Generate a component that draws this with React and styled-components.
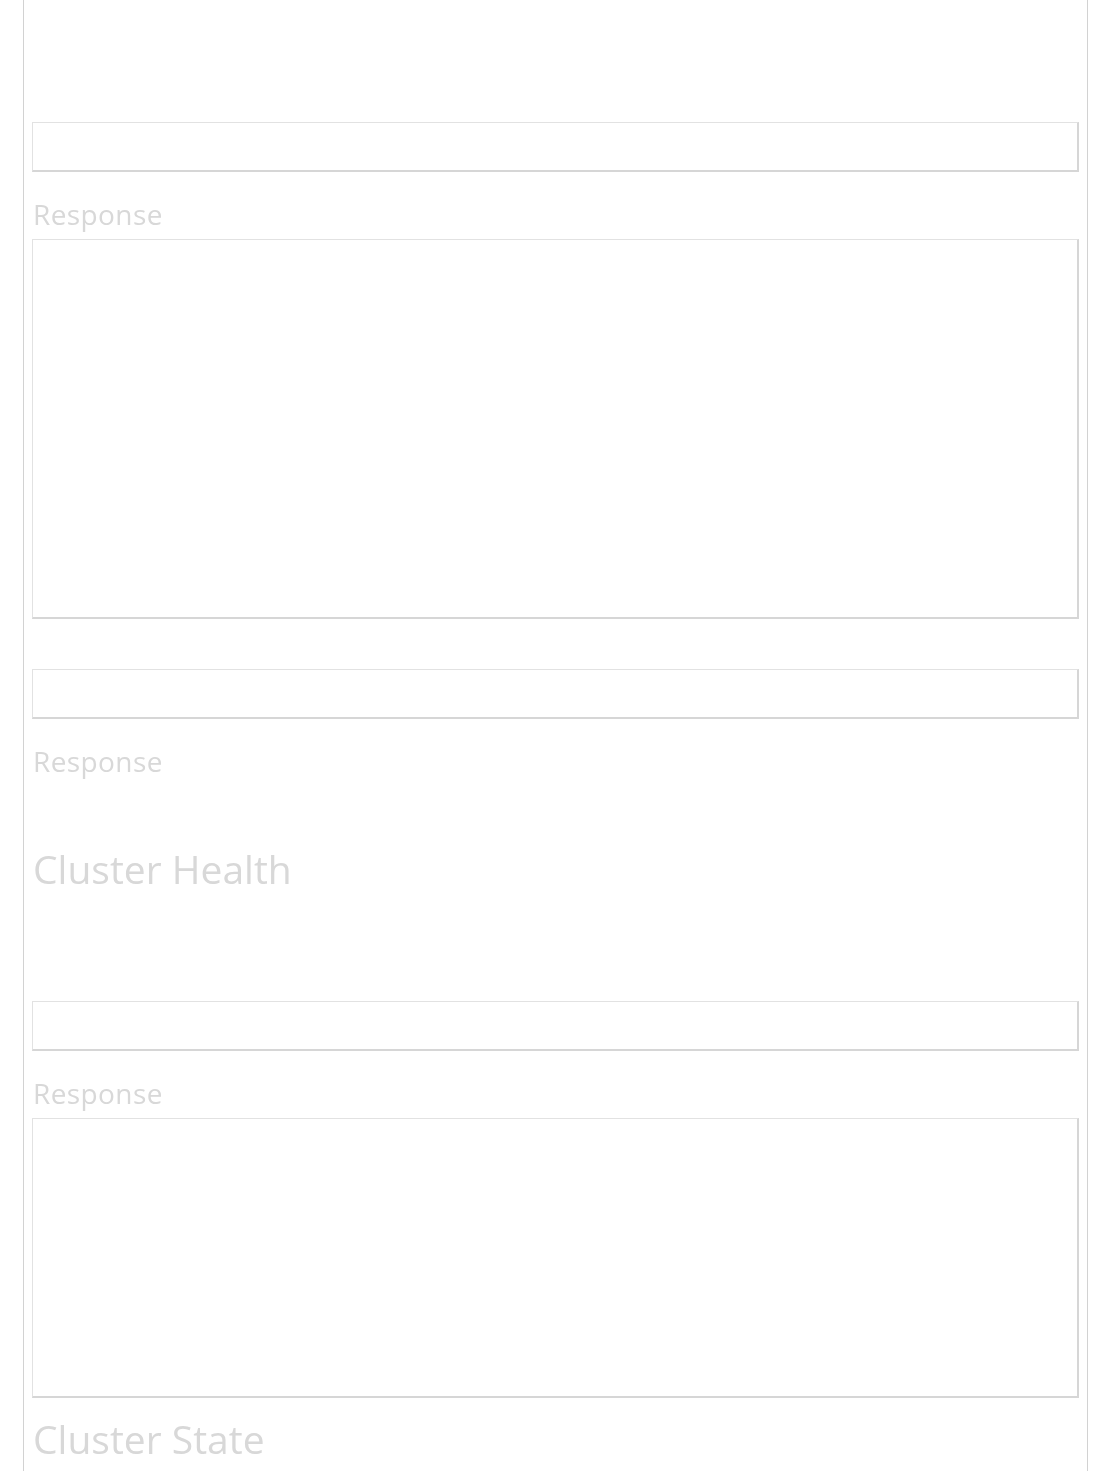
import React from "react";
import styled, { createGlobalStyle } from "styled-components";

const GlobalStyle = createGlobalStyle`
	html, body {
		margin: 0;
		padding: 0;
		background: #ffffff;
	}
	body {
		font-family: "Open Sans", "DejaVu Sans", sans-serif;
		color: #dadada;
	}
`;

const sections = [
	{ id: "search", title: null, output: 380 },
	{ id: "count", title: null, output: null },
	{ id: "health", title: "Cluster Health", output: 280 },
	{ id: "state", title: "Cluster State", output: null, last: true },
];

const App = () => {
	return (
		<>
			<GlobalStyle />
			<Page>
				<Column>
					{sections.map((s) => (
						<Section key={s.id} $first={s.id === "search"} $titled={!!s.title}>
							{s.title && <Heading>{s.title}</Heading>}
							{!s.last && (
								<>
									<Request $titled={!!s.title} />
									<Label>Response</Label>
									{s.output ? (
										<Output style={{ height: s.output }} />
									) : (
										<Blank />
									)}
								</>
							)}
						</Section>
					))}
				</Column>
			</Page>
		</>
	);
};

export default App;

const Page = styled.div`
	padding: 0 22px 0 23px;
	min-height: 1471px;
	box-sizing: border-box;
`;

const Column = styled.div`
	min-height: 1471px;
	box-sizing: border-box;
	border-left: 1px solid #d2d2d2;
	border-right: 1px solid #d2d2d2;
	padding: 122px 8px 0 8px;
	overflow: hidden;
`;

const Section = styled.section`
	display: flex;
	flex-direction: column;
	margin-top: ${(p) => (p.$first ? "0" : p.$titled ? "18px" : "50px")};
`;

const Heading = styled.h2`
	margin: 0;
	padding-left: 1px;
	font-size: 39px;
	line-height: 46px;
	font-weight: 400;
	color: #d8d8d8;
	filter: blur(0.7px);
`;

const Request = styled.div`
	height: 50px;
	box-sizing: border-box;
	margin-top: ${(p) => (p.$titled ? "109px" : "0")};
	border-top: 1px solid #e2e2e2;
	border-left: 1px solid #e2e2e2;
	border-right: 2px solid #d6d6d6;
	border-bottom: 2px solid #d6d6d6;
	background: #ffffff;
`;

const Label = styled.div`
	margin-top: 25px;
	padding-left: 1px;
	font-size: 28px;
	line-height: 34px;
	font-weight: 400;
	color: #d8d8d8;
	letter-spacing: 0.4px;
	filter: blur(0.7px);
`;

const Output = styled.div`
	margin-top: 8px;
	box-sizing: border-box;
	border-top: 1px solid #e2e2e2;
	border-left: 1px solid #e2e2e2;
	border-right: 2px solid #d6d6d6;
	border-bottom: 2px solid #d6d6d6;
	background: #ffffff;
`;

const Blank = styled.div`
	margin-top: 8px;
	height: 42px;
`;
